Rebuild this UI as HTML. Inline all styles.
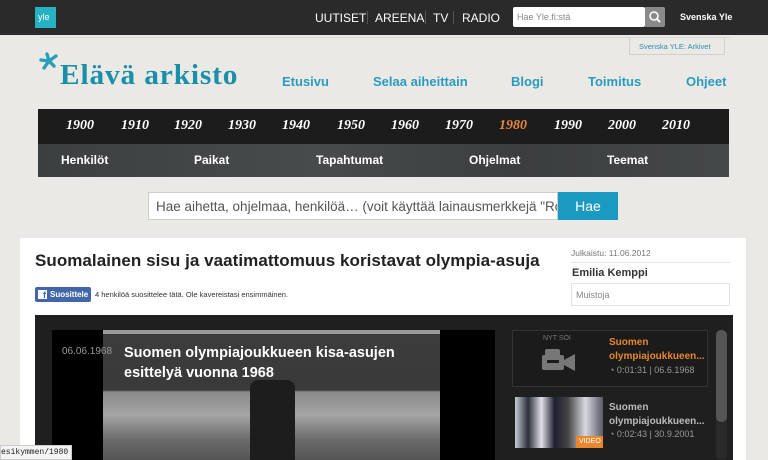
<!DOCTYPE html>
<html><head><meta charset="utf-8"><style>
*{margin:0;padding:0;box-sizing:border-box}
body{width:768px;height:460px;overflow:hidden;background:#eae9e6;font-family:"Liberation Sans",sans-serif;position:relative}
.a{position:absolute}
.top{left:0;top:0;width:768px;height:35px;background:#2a2a2a}
.yle{left:35px;top:7px;width:21px;height:21px;background:#25b3c4;color:#fff;font-size:9px;padding:5px 0 0 3px}
.nav{top:11px;color:#fff;font-size:12px}
.sep{top:11px;width:1px;height:13px;background:#555}
.nl{top:74px;color:#2a9bbf;font-weight:bold;font-size:13px}
.yr{top:118px;color:#fff;font:italic bold 14px "Liberation Serif",serif}
.cat{top:153px;color:#fff;font-weight:bold;font-size:12px}
</style></head><body>
<div class="a top"></div>
<div class="a yle">yle</div>
<div class="a nav" style="left:315px">UUTISET</div>
<div class="a sep" style="left:367px"></div>
<div class="a nav" style="left:375px">AREENA</div>
<div class="a sep" style="left:425px"></div>
<div class="a nav" style="left:433px">TV</div>
<div class="a sep" style="left:453px"></div>
<div class="a nav" style="left:462px">RADIO</div>
<div class="a" style="left:513px;top:7px;width:132px;height:20px;background:#fff;border-radius:2px;font-size:9px;color:#888;padding:5px 4px">Hae Yle.fi:stä</div>
<div class="a" style="left:645px;top:7px;width:20px;height:20px;background:#8a8a8a;border-radius:0 2px 2px 0"><svg width="20" height="20"><circle cx="9" cy="9" r="4" stroke="#fff" stroke-width="1.6" fill="none"/><line x1="12" y1="12" x2="15" y2="15" stroke="#fff" stroke-width="2"/></svg></div>
<div class="a" style="left:680px;top:12px;color:#fff;font-weight:bold;font-size:9px">Svenska Yle</div>
<div class="a" style="left:40px;top:37px;width:690px;height:1px;background:#d8d7d3"></div>
<div class="a" style="left:629px;top:38px;width:96px;height:17px;border:1px solid #d0d0cc;border-top:none;font-size:7.5px;color:#2a8db0;padding:4px 0 0 9px">Svenska YLE: Arkivet</div>
<svg class="a" style="left:37px;top:50px" width="26" height="26"><g stroke="#2aa0b8" stroke-width="3.4" stroke-linecap="round"><line x1="12" y1="11" x2="10" y2="4"/><line x1="12" y1="11" x2="19" y2="6"/><line x1="12" y1="11" x2="4" y2="10"/><line x1="12" y1="11" x2="7" y2="18"/><line x1="12" y1="11" x2="17" y2="16"/></g></svg>
<div class="a" style="left:60px;top:60px;color:#1a8fa8;font:bold 28px 'Liberation Serif',serif;letter-spacing:0.8px;transform:scaleX(1.05);transform-origin:left">Elävä arkisto</div>
<div class="a nl" style="left:282px">Etusivu</div>
<div class="a nl" style="left:373px">Selaa aiheittain</div>
<div class="a nl" style="left:511px">Blogi</div>
<div class="a nl" style="left:588px">Toimitus</div>
<div class="a nl" style="left:686px">Ohjeet</div>
<div class="a" style="left:38px;top:109px;width:691px;height:35px;background:#1c1c1c"></div>
<div class="a" style="left:38px;top:144px;width:691px;height:33px;background:linear-gradient(90deg,#3c3f40,#474b4b 40%,#3b3e3f 70%,#454848)"></div>
<div class="a yr" style="left:66px">1900</div><div class="a yr" style="left:121px">1910</div><div class="a yr" style="left:174px">1920</div><div class="a yr" style="left:228px">1930</div><div class="a yr" style="left:282px">1940</div><div class="a yr" style="left:337px">1950</div><div class="a yr" style="left:391px">1960</div><div class="a yr" style="left:445px">1970</div><div class="a yr" style="left:499px;color:#e8873a">1980</div><div class="a yr" style="left:554px">1990</div><div class="a yr" style="left:608px">2000</div><div class="a yr" style="left:662px">2010</div>
<div class="a cat" style="left:61px">Henkilöt</div><div class="a cat" style="left:194px">Paikat</div><div class="a cat" style="left:316px">Tapahtumat</div><div class="a cat" style="left:469px">Ohjelmat</div><div class="a cat" style="left:607px">Teemat</div>
<div class="a" style="left:148px;top:192px;width:410px;height:28px;background:#fff;border:1px solid #ccc;font-size:13.5px;color:#555;padding:6px 7px;white-space:nowrap;overflow:hidden">Hae aihetta, ohjelmaa, henkilöä… (voit käyttää lainausmerkkejä "Ro</div>
<div class="a" style="left:558px;top:192px;width:60px;height:28px;background:#1a9ac0;color:#fff;font-size:14px;text-align:center;padding-top:6px">Hae</div>
<div class="a" style="left:20px;top:238px;width:726px;height:222px;background:#fff"></div>
<div class="a" style="left:35px;top:251px;font-size:17px;font-weight:bold;color:#222;letter-spacing:0.05px">Suomalainen sisu ja vaatimattomuus koristavat olympia-asuja</div>
<div class="a" style="left:571px;top:248px;font-size:8.5px;color:#777">Julkaistu: 11.06.2012</div>
<div class="a" style="left:571px;top:262px;width:159px;height:1px;background:#e6e6e6"></div>
<div class="a" style="left:572px;top:267px;font-size:11px;font-weight:bold;color:#333">Emilia Kemppi</div>
<div class="a" style="left:571px;top:283px;width:159px;height:23px;border:1px solid #e2e2e2;font-size:9px;color:#888;padding:6px 4px">Muistoja</div>
<div class="a" style="left:35px;top:287px;width:56px;height:15px;background:#4267a9;border-radius:2px;color:#fff;font-size:8px;font-weight:bold;padding:3px 0 0 15px">Suosittele</div>
<div class="a" style="left:38px;top:290px;width:9px;height:9px;background:#fff;color:#4267a9;font-size:9px;font-weight:bold;line-height:11px;text-align:right;padding-right:1px">f</div>
<div class="a" style="left:95px;top:290px;font-size:7.5px;color:#333">4 henkilöä suosittelee tätä. Ole kavereistasi ensimmäinen.</div>
<div class="a" style="left:35px;top:315px;width:698px;height:145px;background:#1f1f1f"></div>
<div class="a" style="left:52px;top:330px;width:443px;height:130px;background:#000"></div>
<div class="a" style="left:103px;top:330px;width:337px;height:130px;background:linear-gradient(180deg,#9a9a9a 0,#9a9a9a 4px,#3c3c3c 4px,#3a3a3a 60px,#8a8a8a 62px,#a5a5a5 85px,#6a6a6a 110px,#555 130px)"></div>
<div class="a" style="left:250px;top:380px;width:45px;height:80px;background:#1d1d1d;border-radius:8px 8px 0 0"></div>
<div class="a" style="left:62px;top:346px;font-size:10px;color:#999">06.06.1968</div>
<div class="a" style="left:124px;top:343px;font-size:14.5px;font-weight:bold;color:#fff;line-height:20px">Suomen olympiajoukkueen kisa-asujen<br>esittelyä vuonna 1968</div>
<div class="a" style="left:512px;top:330px;width:196px;height:57px;border:1px solid #333;background:#1b1b1b"></div>
<div class="a" style="left:543px;top:335px;font-size:7px;color:#777">NYT SOI</div>
<svg class="a" style="left:541px;top:349px" width="36" height="24"><rect x="1" y="6" width="22" height="15" rx="2" fill="#777"/><rect x="4" y="0" width="15" height="7" rx="2" fill="#777"/><polygon points="23,11 34,5 34,22 23,16" fill="#777"/><rect x="6" y="11" width="12" height="3" fill="#1b1b1b"/></svg>
<div class="a" style="left:609px;top:336px;font-size:10px;font-weight:bold;color:#e8872e;line-height:14px">Suomen<br>olympiajoukkueen...</div>
<div class="a" style="left:609px;top:365px;font-size:9px;color:#999">◔ 0:01:31 | 06.6.1968</div>
<div class="a" style="left:515px;top:397px;width:88px;height:51px;background:linear-gradient(90deg,#c8ccd6,#2a2d3a 15%,#e0e0e8 30%,#1e2030 45%,#444 60%,#d8d8e0 80%,#5a5a66)"></div>
<div class="a" style="left:576px;top:436px;width:27px;height:12px;background:#e8872e;color:#fff;font-size:7px;padding:2px 0 0 3px">VIDEO</div>
<div class="a" style="left:609px;top:401px;font-size:10px;font-weight:bold;color:#bbb;line-height:14px">Suomen<br>olympiajoukkueen...</div>
<div class="a" style="left:609px;top:429px;font-size:9px;color:#999">◔ 0:02:43 | 30.9.2001</div>
<div class="a" style="left:716px;top:330px;width:11px;height:130px;background:#2a2a2a;border-radius:5px"></div>
<div class="a" style="left:716px;top:330px;width:11px;height:92px;background:#555;border-radius:5px"></div>
<div class="a" style="left:0;top:445px;width:72px;height:15px;background:#f4f4f4;border:1px solid #ccc;font:8px 'Liberation Mono',monospace;color:#222;padding:2px 0 0 0;white-space:nowrap;overflow:hidden">esikymmen/1980</div>
</body></html>
